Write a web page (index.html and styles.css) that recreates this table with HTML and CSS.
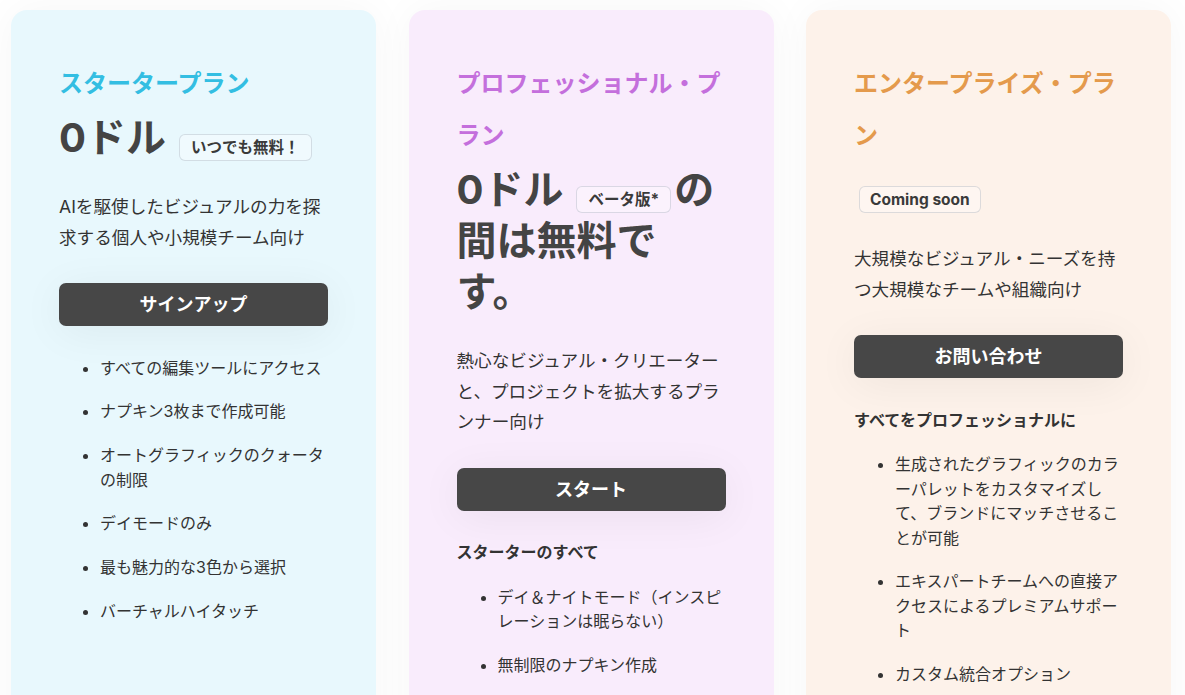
FILE: index.html
```html
<!DOCTYPE html>
<html lang="ja">
<head>
<meta charset="utf-8">
<title>料金プラン</title>
<link rel="stylesheet" href="styles.css">
</head>
<body>
<main class="plans">
  <section class="card card--starter">
    <h2 class="plan-name">スタータープラン</h2>
    <p class="price">0ドル<span class="badge">いつでも無料！</span></p>
    <p class="desc">AIを駆使したビジュアルの力を探求する個人や小規模チーム向け</p>
    <a class="cta" href="#">サインアップ</a>
    <ul class="features">
      <li>すべての編集ツールにアクセス</li>
      <li>ナプキン3枚まで作成可能</li>
      <li>オートグラフィックのクォータの制限</li>
      <li>デイモードのみ</li>
      <li>最も魅力的な3色から選択</li>
      <li>バーチャルハイタッチ</li>
    </ul>
  </section>

  <section class="card card--pro">
    <h2 class="plan-name">プロフェッショナル・プラン</h2>
    <p class="price">0ドル<span class="badge">ベータ版*</span>の間は無料です。</p>
    <p class="desc">熱心なビジュアル・クリエーターと、プロジェクトを拡大するプランナー向け</p>
    <a class="cta" href="#">スタート</a>
    <h3 class="features-title">スターターのすべて</h3>
    <ul class="features features--after-title">
      <li>デイ＆ナイトモード（インスピレーションは眠らない）</li>
      <li>無制限のナプキン作成</li>
    </ul>
  </section>

  <section class="card card--enterprise">
    <h2 class="plan-name">エンタープライズ・プラン</h2>
    <p class="price price--badge-only"><span class="badge badge--latin">Coming soon</span></p>
    <p class="desc">大規模なビジュアル・ニーズを持つ大規模なチームや組織向け</p>
    <a class="cta" href="#">お問い合わせ</a>
    <h3 class="features-title">すべてをプロフェッショナルに</h3>
    <ul class="features features--after-title">
      <li>生成されたグラフィックのカラーパレットをカスタマイズして、ブランドにマッチさせることが可能</li>
      <li>エキスパートチームへの直接アクセスによるプレミアムサポート</li>
      <li>カスタム統合オプション</li>
    </ul>
  </section>
</main>
</body>
</html>
```

FILE: styles.css
```css
* {
  box-sizing: border-box;
}

html, body {
  margin: 0;
  padding: 0;
  background: #ffffff;
}

body {
  font-family: "Inter", "Noto Sans CJK JP", sans-serif;
  color: #333333;
  overflow: hidden;
}

.plans {
  display: grid;
  grid-template-columns: repeat(3, 365px);
  column-gap: 32.5px;
  padding: 10px 0 0 11px;
  align-items: stretch;
}

.card {
  border-radius: 16px;
  padding: 46px 48px 60px;
  box-shadow: 0 0 40px rgba(0, 0, 0, 0.04);
  min-height: 760px;
}

.card--starter {
  background: #e8f8fd;
}

.card--pro {
  background: #f9ecfc;
}

.card--enterprise {
  background: #fdf2ea;
}

.plan-name {
  margin: 0;
  font-size: 24px;
  line-height: 52px;
  font-weight: 700;
  font-family: "Noto Sans CJK JP", sans-serif;
}

.card--starter .plan-name {
  color: #33bee2;
}

.card--pro .plan-name {
  color: #c46fdc;
}

.card--enterprise .plan-name {
  color: #e49a4c;
}

.price {
  margin: 4px 0 0;
  font-size: 40px;
  line-height: 51px;
  font-weight: 700;
  color: #444444;
  font-family: "Inter", "Noto Sans CJK JP", sans-serif;
}

.price--badge-only {
  height: 51px;
}

.badge {
  display: inline-block;
  vertical-align: baseline;
  height: 27px;
  line-height: 25px;
  padding: 0 11px;
  margin: 0 3px 0 13px;
  font-size: 15.5px;
  font-weight: 700;
  color: #3a3a3a;
  background: rgba(255, 255, 255, 0.35);
  border: 1px solid rgba(120, 130, 150, 0.25);
  border-radius: 6px;
  position: relative;
  top: 1px;
}

.price--badge-only .badge {
  margin-left: 5px;
}

.badge--latin {
  font-size: 15.5px;
  padding: 0 10px;
}

.desc {
  margin: 29px 0 0;
  font-size: 17.6px;
  line-height: 30.5px;
  color: #333333;
}

.cta {
  display: block;
  margin-top: 30px;
  height: 43px;
  line-height: 43px;
  text-align: center;
  background: #474747;
  color: #ffffff;
  font-size: 18px;
  font-weight: 700;
  text-decoration: none;
  border-radius: 7px;
  box-shadow: 0 6px 44px rgba(0, 0, 0, 0.06);
}

.features-title {
  margin: 29.5px 0 0;
  font-size: 16px;
  line-height: 25px;
  font-weight: 700;
  color: #333333;
}

.features {
  margin: 29.5px 0 0;
  padding: 0 0 0 41px;
  font-size: 16px;
  line-height: 24.5px;
  color: #333333;
}

.features--after-title {
  margin-top: 19.5px;
}

.features li {
  margin-bottom: 19.3px;
}
```
